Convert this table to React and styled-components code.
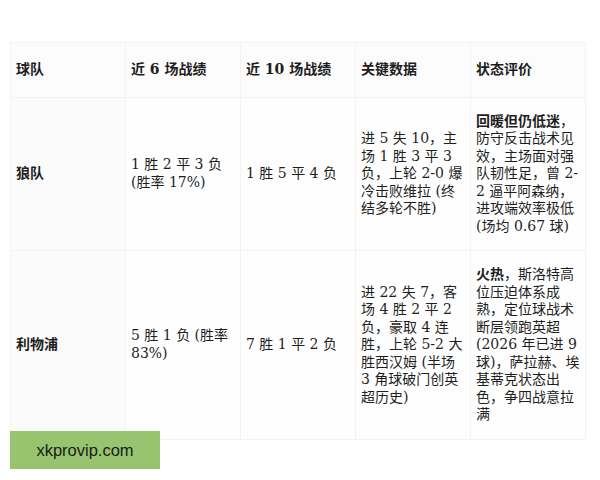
import React from 'react';
import styled, { createGlobalStyle } from 'styled-components';

const GlobalStyle = createGlobalStyle`
  html, body {
    margin: 0;
    padding: 0;
    background: #ffffff;
  }
`;

const Page = styled.div`
  position: relative;
  width: 600px;
  height: 480px;
  padding: 42px 0 0 10px;
  box-sizing: border-box;
  overflow: hidden;
  font-family: "DejaVu Serif", "Noto Sans CJK SC", serif;
  color: #1e1e1e;
`;

const Table = styled.table`
  border-collapse: collapse;
  table-layout: fixed;
  width: 575px;
  background: #fdfdfd;
`;

const Head = styled.th`
  box-sizing: border-box;
  width: 115px;
  padding: 18px 5px;
  text-align: left;
  vertical-align: middle;
  font-size: 14px;
  line-height: 17.5px;
  font-weight: 700;
  border: 1px solid #f3f3f3;
  background: #fcfcfc;
`;

const Cell = styled.td`
  box-sizing: border-box;
  padding: 15px 5px;
  vertical-align: middle;
  font-size: 14px;
  line-height: 17.5px;
  font-weight: ${p => (p.$team ? 700 : 400)};
  border: 1px solid #f3f3f3;
  background: ${p => (p.$team ? '#fbfbfb' : '#fefefe')};
`;

const Strong = styled.b`
  font-weight: 700;
`;

const Badge = styled.div`
  position: absolute;
  left: 10px;
  top: 431px;
  width: 150px;
  height: 38px;
  display: flex;
  align-items: center;
  justify-content: center;
  background: #98c46f;
  font-family: "Liberation Sans", Arial, sans-serif;
  font-size: 16.5px;
  color: #1a1a1a;
`;

const headers = ['球队', '近 6 场战绩', '近 10 场战绩', '关键数据', '状态评价'];

const rows = [
  {
    team: '狼队',
    six: '1 胜 2 平 3 负 (胜率 17%)',
    ten: '1 胜 5 平 4 负',
    data: '进 5 失 10，主场 1 胜 3 平 3 负，上轮 2-0 爆冷击败维拉 (终结多轮不胜)',
    tag: '回暖但仍低迷',
    note: '，防守反击战术见效，主场面对强队韧性足，曾 2-2 逼平阿森纳，进攻端效率极低 (场均 0.67 球)',
  },
  {
    team: '利物浦',
    six: '5 胜 1 负 (胜率 83%)',
    ten: '7 胜 1 平 2 负',
    data: '进 22 失 7，客场 4 胜 2 平 2 负，豪取 4 连胜，上轮 5-2 大胜西汉姆 (半场 3 角球破门创英超历史)',
    tag: '火热',
    note: '，斯洛特高位压迫体系成熟，定位球战术断层领跑英超 (2026 年已进 9 球)，萨拉赫、埃基蒂克状态出色，争四战意拉满',
  },
];

export default function App() {
  return (
    <Page>
      <GlobalStyle />
      <Table>
        <thead>
          <tr>
            {headers.map(h => (
              <Head key={h}>{h}</Head>
            ))}
          </tr>
        </thead>
        <tbody>
          {rows.map(r => (
            <tr key={r.team}>
              <Cell $team>{r.team}</Cell>
              <Cell>{r.six}</Cell>
              <Cell>{r.ten}</Cell>
              <Cell>{r.data}</Cell>
              <Cell>
                <Strong>{r.tag}</Strong>
                {r.note}
              </Cell>
            </tr>
          ))}
        </tbody>
      </Table>
      <Badge>xkprovip.com</Badge>
    </Page>
  );
}
